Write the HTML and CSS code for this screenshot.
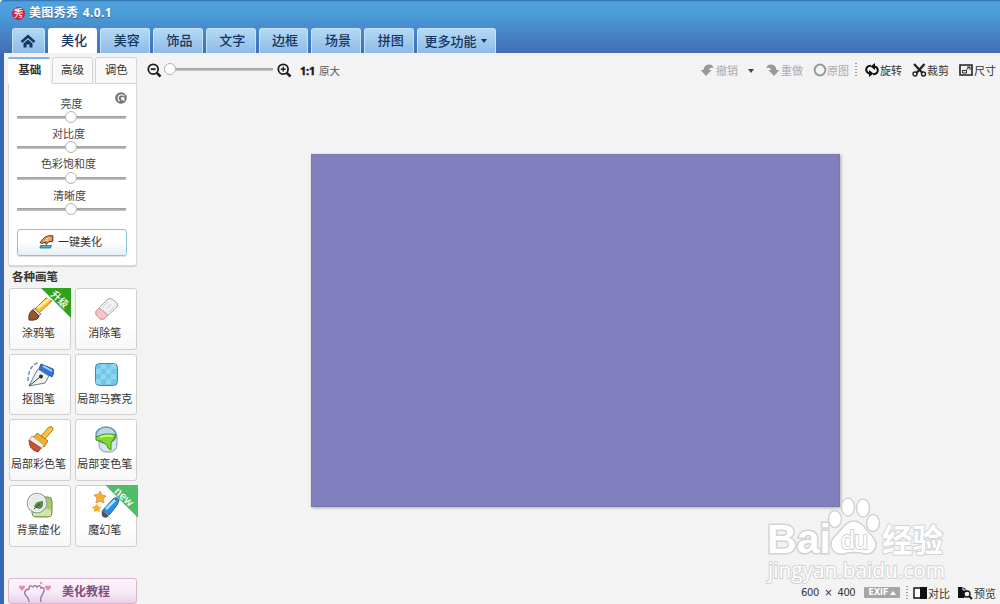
FILE: index.html
```html
<!DOCTYPE html>
<html lang="zh-CN">
<head>
<meta charset="utf-8">
<title>美图秀秀 4.0.1</title>
<link rel="stylesheet" href="styles.css">
</head>
<body>
<div class="app">
  <header class="header">
    <div class="titlebar">
      <span class="logo">秀</span>
      <h1 class="title">美图秀秀 4.0.1</h1>
    </div>
    <nav class="tabs">
      <a class="tab tab-home"><svg width="16" height="14" viewBox="0 0 16 14"><path d="M1.500 8 8 2.200 14.500 8" fill="none" stroke="#143763" stroke-width="2.500"/><path d="M3.500 9.500 8 5.600l4.500 3.900v4H9.500V10.500h-3v3h-3z" fill="#143763"/></svg></a>
      <a class="tab tab-active">美化</a>
      <a class="tab">美容</a>
      <a class="tab">饰品</a>
      <a class="tab">文字</a>
      <a class="tab">边框</a>
      <a class="tab">场景</a>
      <a class="tab">拼图</a>
      <a class="tab tab-more">更多功能<i class="caret"></i></a>
    </nav>
  </header>
  <div class="body">
    <aside class="sidebar">
      <div class="subtabs">
        <span class="subtab subtab-active">基础</span>
        <span class="subtab">高级</span>
        <span class="subtab">调色</span>
      </div>
      <section class="panel">
        <svg class="reset" width="12" height="12" viewBox="0 0 12 12"><circle cx="6" cy="6" r="5.800" fill="#747474"/><path d="M4.600 9.200C2.200 7.500 2.600 3 6.500 2.800q2 0 2.800 1.500" fill="none" stroke="#fff" stroke-width="1.100"/><path d="M5.800 5.300h3.600v3.500H8V7.600L6.800 9z" fill="#fff"/></svg>
        <div class="control"><span class="control-label">亮度</span><span class="slider"><i class="thumb"></i></span></div>
        <div class="control"><span class="control-label shift">对比度</span><span class="slider"><i class="thumb"></i></span></div>
        <div class="control control-wide"><span class="control-label shift">色彩饱和度</span><span class="slider"><i class="thumb"></i></span></div>
        <div class="control"><span class="control-label shift-less">清晰度</span><span class="slider"><i class="thumb"></i></span></div>
        <button class="auto"><svg width="15" height="14" viewBox="0 0 15 14"><path d="M1.500 10.500h11l-1 2.500H1z" fill="#49a9c9" stroke="#236b88" stroke-width=".8"/><path d="M1 7.500 5.500 2.500 9.500.8h4.300v5.400l-4 .6-2.300 2.500-1.200-.7 1-2L3 8.500z" fill="#e5a35a" stroke="#50300f" stroke-width="1"/><path d="m7 4 3-1.500M6 6l3-1" stroke="#fce4b3"/></svg><span class="auto-text">一键美化</span></button>
      </section>
      <h2 class="heading">各种画笔</h2>
      <div class="tools">
        <div class="tool"><svg width="28" height="28" viewBox="0 0 28 28"><path d="M9 15 20 4l6 3-13 12z" fill="#f8bd35" stroke="#bf8117"/><path d="m12 14 11-9" stroke="#fff0a0" stroke-width="2.500"/><path d="m8 14 7 6-2 2-7-5z" fill="#d8d5cf" stroke="#8c8579"/><path d="M7 16q-5 2-4 10 9 1 10-4z" fill="#95572b" stroke="#60331a"/></svg><span>涂鸦笔</span><b class="ribbon ribbon-up"><em>升级</em></b></div>
        <div class="tool"><svg width="28" height="28" viewBox="0 0 28 28"><path d="M4 17 16 5q2-1 4 0l5 4q1 2 0 4L12 25H8l-4-4z" fill="#f1f1f2" stroke="#aaa"/><path d="m4 17 3-3 9 7-4 4H8l-4-4z" fill="#f6c4c8" stroke="#d1959b"/><path d="m8 14 9 7M16 8l-5 5m8-3-5 5m8-2-5 5" stroke="#ccc"/></svg><span>消除笔</span></div>
        <div class="tool"><svg width="28" height="28" viewBox="0 0 28 28"><path d="M2 21Q2 6 13 2" fill="none" stroke="#6e8fc5" stroke-width="1.500" stroke-dasharray="4 2"/><path d="m15 4 12 5q2 2-1 8L13 9z" fill="#2f74d8" stroke="#2258a6"/><path d="m17 6 9 5" stroke="#a5d5ff" stroke-width="2"/><path d="m12 9 11 7-4 7-16 3 6-12z" fill="#eef0f1" stroke="#717b87"/><path d="m3 26 11-9" stroke="#444"/><circle cx="15" cy="16.500" r="2" fill="#333"/></svg><span>抠图笔</span></div>
        <div class="tool"><svg width="28" height="28" viewBox="0 0 28 28"><rect x="3.500" y="3.500" width="22" height="22" rx="4" fill="#72c6ec" stroke="#4387b3"/><path d="M9 4h5v5H9zm10 0h5v5h-5zM4 9h5v5H4zm10 0h5v5h-5zM9 14h5v5H9zm10 0h5v5h-5zM4 19h5v5H4zm10 0h5v5h-5z" fill="#98dcf3" opacity=".75"/></svg><span>局部马赛克</span></div>
        <div class="tool"><svg width="28" height="28" viewBox="0 0 28 28"><path d="m15 11 7-8q3-3 5 0 1 2-3 5l-5 6z" fill="#fcc53c" stroke="#b8781d"/><path d="m11 8 11 8-4 6L6 12q4 0 5-4z" fill="#f2b128" stroke="#b97419"/><path d="m6 11 12 9-3 4L3 15z" fill="#f2eee7" stroke="#b8aaa0"/><path d="m3 15 12 8-3 4Q3 25 3 15z" fill="#c95232" stroke="#9a422e"/></svg><span>局部彩色笔</span></div>
        <div class="tool"><svg width="28" height="28" viewBox="0 0 28 28"><rect x="7" y="5" width="18" height="22" rx="7" fill="#d5e3ed" stroke="#7c9db4"/><ellipse cx="14" cy="10" rx="10" ry="8" fill="#bcd7e7" stroke="#6c95af" stroke-width="1.500"/><path d="M4 12q10-5 20-2l-3 5-2 3v7l-3-2-1-3-6-4-5-1z" fill="#83d72d" stroke="#40961f"/><path d="M8 12q6-2 13-1" fill="none" stroke="#caf57c" stroke-width="2"/></svg><span>局部变色笔</span></div>
        <div class="tool"><svg width="28" height="28" viewBox="0 0 28 28"><rect x="6" y="6" width="20" height="20" rx="4" fill="#a9ca70" stroke="#738b59"/><path d="M7 20q10-4 18-1v6H7z" fill="#d5e5a4"/><circle cx="11" cy="12" r="9" fill="#e9f0ed" fill-opacity=".95" stroke="#8a9999" stroke-width="2.500"/><circle cx="11" cy="12" r="8.500" fill="none" stroke="#fff" stroke-width="1.500"/><path d="M8 16q1-6 9-6 1 7-4 8z" fill="#568a48"/><path d="m8 18 6-5" stroke="#234d33"/></svg><span>背景虚化</span></div>
        <div class="tool"><svg width="28" height="28" viewBox="0 0 28 28"><path d="m8 0 2 4 4 1-3 3 1 4-4-2-4 2 1-5-3-3 5-1z" fill="#f7ae35" stroke="#e69b40"/><path d="m5 13 1.500 2.500 3 .5-2 2v3L5 20l-3 1v-3l-2-2 3-1z" fill="#f7ae35"/><path d="M11 19 21 8q4-3 6 1 0 4-10 15z" fill="#2c91df" stroke="#23609f"/><path d="m14 18 9-9" stroke="#9ee7ff" stroke-width="2.500"/><path d="m10 19 7 6q-3 3-6 1-2-2-1-7z" fill="#465164"/></svg><span>魔幻笔</span><b class="ribbon ribbon-new"><em>new</em></b></div>
      </div>
      <a class="tutorial"><svg width="34" height="24" viewBox="0 0 34 24"><path d="m4 12-3-3.500q-.5-3 3-1.500 3.500-1.500 3 1.500zm26 0-3-3.500q-.5-3 3-1.500 3.500-1.500 3 1.500z" fill="#e98dae"/><path d="M11 23q0-3-2-5-4-4-1-7l3-1q0-5 4-2 2-3 4 0 3-3 4 1 4-1 3 3-1 3-3 6-1 2 0 5" fill="none" stroke="#a279a4" stroke-width="1.500"/><circle cx="23" cy="4" r="1.300" fill="#c8a5c3"/></svg>美化教程</a>
    </aside>
    <main class="workspace">
      <div class="toolbar">
        <svg class="zoom-out" width="15" height="15" viewBox="0 0 15 15" fill="none" stroke="#1c1c1c" stroke-width="1.800"><circle cx="6.200" cy="6.200" r="4.900"/><path d="M3.800 6.200h4.800"/><path d="m9.800 9.800 3.700 3.700" stroke-width="2.600"/></svg>
        <div class="zoom-track"><i class="thumb"></i></div>
        <svg class="zoom-in" width="15" height="15" viewBox="0 0 15 15" fill="none" stroke="#1c1c1c" stroke-width="1.800"><circle cx="6.200" cy="6.200" r="4.900"/><path d="M3.800 6.200h4.800M6.200 3.800v4.800" stroke-width="1.400"/><path d="m9.800 9.800 3.700 3.700" stroke-width="2.600"/></svg>
        <b class="ratio">1:1</b><span class="gray">原大</span>
        <div class="actions">
          <span class="action off undo"><svg width="14" height="14" viewBox="0 0 14 14"><path d="M.5 7h3Q4 1.500 9.500 1.500q3.500 0 4 3.500-4-1-4.500 2h2.500L6 13z" fill="#999"/></svg>撤销</span>
          <i class="caret caret-gray"></i>
          <span class="action off redo"><svg width="14" height="14" viewBox="0 0 14 14"><path d="M13.500 7h-3Q10 1.500 4.500 1.500 1 1.500.5 5q4-1 4.500 2H2.500L8 13z" fill="#999"/></svg>重做</span>
          <span class="action off original"><svg width="14" height="14" viewBox="0 0 14 14"><circle cx="7" cy="7" r="5.400" fill="none" stroke="#999" stroke-width="2"/></svg>原图</span>
          <i class="dots"></i>
          <span class="action rotate"><svg width="14" height="14" viewBox="0 0 14 14"><path d="M6 2.800C2 2.500.8 5.500 1.400 7.800c.5 1.800 2 2.700 4 2.700M8 11.200c4 .3 5.200-2.700 4.600-5-.5-1.800-2-2.700-4-2.700" fill="none" stroke="#111" stroke-width="2"/><path d="m4 7 4.500 3.500-4.500 3.500zM10 0 5.500 3.500 10 7z" fill="#111"/></svg>旋转</span>
          <span class="action crop"><svg width="15" height="14" viewBox="0 0 15 14" fill="none" stroke="#222"><path d="m2 1 8.500 9M12.500 1 4.500 10" stroke-width="2.300"/><circle cx="3" cy="11" r="2" stroke-width="1.400"/><circle cx="11.500" cy="11" r="2" stroke-width="1.400"/></svg>裁剪</span>
          <span class="action size"><svg width="14" height="12" viewBox="0 0 14 12" fill="none" stroke="#222"><path d="M1 1h12v10H1z" stroke-width="1.600"/><path d="M3.500 6.500h4V9h-4zM7.500 5.500l3-2.500M8 3h3v3"/></svg>尺寸</span>
        </div>
      </div>
      <div class="stage"><div class="canvas"></div></div>
      <footer class="status">
        <span class="dims">600 × 400</span><span class="exif">EXIF<i></i></span><i class="dots"></i>
        <span class="action compare"><svg width="14" height="12" viewBox="0 0 14 12"><path d="M1 1h12v10H1z" fill="#fff" stroke="#111" stroke-width="1.400"/><path d="M7 0h7v12H7z" fill="#111"/></svg>对比</span>
        <span class="action preview"><svg width="15" height="14" viewBox="0 0 15 14"><path d="M0 1h5l4 3v3l-3 5H0z" fill="#111"/><path d="M5 1v3h4" fill="none" stroke="#fff"/><circle cx="9" cy="8" r="3" fill="#f3f3f3" stroke="#111" stroke-width="1.300"/><path d="m11 10 3 3" stroke="#111" stroke-width="2"/></svg>预览</span>
      </footer>
    </main>
  </div>
  <svg class="watermark" width="186" height="98" viewBox="0 0 186 98">
    <text class="wm-brand" x="3" y="60" textLength="64" lengthAdjust="spacingAndGlyphs" font-size="41">Bai</text>
    <g fill="#fff" stroke="#d2d2d2" stroke-width="1.500">
      <ellipse cx="71" cy="26" rx="6.500" ry="8.500"/><ellipse cx="84" cy="14" rx="6.500" ry="9"/><ellipse cx="99" cy="15" rx="6.500" ry="9"/><ellipse cx="109" cy="30" rx="6.500" ry="8.500"/>
      <path d="M90 28c9 0 12 10 18 15 8 8 3 19-7 18-8-2-14-2-21 0-11 2-17-9-10-17 8-7 11-16 20-16z"/>
    </g>
    <text class="wm-du" x="77" y="56" font-size="25" textLength="27">du</text>
    <text class="wm-cjk" x="118" y="59" font-size="32" textLength="61" lengthAdjust="spacingAndGlyphs">经验</text>
    <text class="wm-url" x="4" y="85" font-size="21" textLength="177" lengthAdjust="spacingAndGlyphs">jingyan.baidu.com</text>
  </svg>
</div>
</body>
</html>
```
FILE: styles.css
```css
* { box-sizing: border-box; }
body { margin: 0; font-family: "Liberation Sans", "Noto Sans CJK SC", sans-serif; font-size: 11px; color: #333; }
svg { display: block; flex: none; }
i, em { font-style: normal; }
.app { position: relative; width: 1000px; height: 604px; overflow: hidden; background: #f3f3f3; display: flex; flex-direction: column; }
.header { height: 53px; flex: none; background: linear-gradient(#2d6cac 0, #50a1dc 2px, #4a9bd9 15px, #426fb5 52px); border-radius: 4px 0 0 0; }
.titlebar { height: 28px; padding: 0 0 2px 12px; display: flex; align-items: center; }
.logo { width: 13px; height: 13px; border-radius: 50%; background: radial-gradient(#df3549, #b71530); color: #fff; font: 10px/12px "Noto Sans CJK SC", sans-serif; text-align: center; margin-right: 4px; }
.title { margin: 0; font: bold 12px/18px "DejaVu Sans", "Noto Sans CJK SC", sans-serif; font-family: "Open Sans", "Noto Sans CJK SC", sans-serif; color: #fff; letter-spacing: .35px; word-spacing: 1px; text-shadow: 0 1px 1px #2a609b; }
.tabs { display: flex; gap: 3px; height: 25px; padding-left: 12px; }
.tab { width: 49.800px; display: flex; align-items: center; justify-content: center; border: 1px solid #c5e3f8; border-bottom: 0; border-radius: 3px 3px 0 0; background: linear-gradient(#b5d9f5, #8dbbe5); color: #16355f; font: 500 13px/22px "Noto Sans CJK SC", sans-serif; padding: 0 0 2px 3px; }
.tab-home { width: 32.500px; padding: 0; }
.tab-active { background: #fff; border-color: #fff; }
.tab-more { width: 79px; padding: 0 2px 0 0; }
.caret { border: 3.500px solid transparent; border-top: 4px solid #16355f; border-bottom: 0; margin-left: 4px; }
.body { flex: 1; min-height: 0; display: flex; border-left: 4px solid #3768b3; }
.sidebar { width: 134px; flex: none; padding: 4px 0 0 4px; }
.subtabs { display: flex; width: 129px; gap: 2px; height: 27px; }
.subtab { flex: 1; height: 27px; border: 1px solid #d6d6d6; border-radius: 3px 3px 0 0; background: #f9f9f9; text-align: center; font: 11.500px/23px "Noto Sans CJK SC", sans-serif; }
.subtab-active { background: #fff; border: 0; border-top: 2px solid #7cb7e4; border-radius: 2px 2px 0 0; font-weight: 700; padding-left: 2px; line-height: 21px; }
.panel { position: relative; width: 129px; height: 182px; background: #fff; border: 1px solid #dadada; border-top: 0; border-radius: 0 0 3px 3px; box-shadow: 0 1px 1px #d0d0d0; padding: 13px 10px 0 8px; }
.reset { position: absolute; right: 9px; top: 8px; }
.control { height: 30px; display: flex; flex-direction: column; }
.control-wide { height: 32px; }
.control-wide .slider { margin-top: 1px; }
.control-label { height: 14px; text-align: center; font: 11px/12px "Noto Sans CJK SC", sans-serif; color: #444; }
.shift { padding-right: 6px; }
.shift-less { padding-right: 4px; }
.slider { display: flex; align-items: center; justify-content: center; height: 12px; padding-right: 2px; background: linear-gradient(#999, #c7c7c7) center / 100% 3px no-repeat; }
.thumb { display: block; width: 12px; height: 12px; border: 1px solid #b4b4b4; border-radius: 50%; background: #fff; }
.auto { width: 110px; height: 27px; margin: 10px 0 0; padding: 0 3px 2px 0; display: flex; align-items: center; justify-content: center; gap: 4px; border: 1px solid #96bfd4; border-radius: 3px; background: linear-gradient(#fff 45%, #e6f0f6); box-shadow: 0 1px 1px #d5e0e6; color: #333; font: 11px/20px "Noto Sans CJK SC", sans-serif; }
.auto-text { padding-bottom: 2px; }
.heading { margin: 2px 0 3px 4px; font: bold 11.500px/17px "Noto Sans CJK SC", sans-serif; color: #333; }
.tools { display: grid; grid-template-columns: 62px 62px; grid-auto-rows: 61.500px; gap: 4.200px; margin-left: 1px; }
.tool { position: relative; display: flex; flex-direction: column; align-items: center; padding-top: 5px; border: 1px solid #d0d0d0; border-radius: 3px; background: linear-gradient(#fff 60%, #f7f7f7); }
.tool span { font: 11px/16px "Noto Sans CJK SC", sans-serif; margin-top: 2px; white-space: nowrap; padding-right: 3px; }
.ribbon { position: absolute; top: -1px; right: -1px; width: 30px; height: 30px; font: 500 10px/12px "Noto Sans CJK SC", sans-serif; color: #fff; clip-path: polygon(0 0, 100% 0, 100% 100%); background: #2fa11d; }
.ribbon em { position: absolute; top: 5px; right: -3px; width: 28px; text-align: center; transform: rotate(43deg); }
.ribbon-new { background: #4dbd67; width: 33px; height: 33px; right: -2px; }
.ribbon-new em { font-size: 11px; top: 5px; right: -1px; }
.tutorial { display: flex; align-items: center; width: 129px; height: 26px; margin-top: 31px; padding-left: 9px; gap: 10px; border: 1px solid #d8b6d2; border-radius: 3px; background: linear-gradient(#fcf4fa, #f5e9f6 60%, #eacfe6); color: #81507e; font: bold 12px/22px "Noto Sans CJK SC", sans-serif; }
.workspace { flex: 1; min-width: 0; display: flex; flex-direction: column; }
.toolbar { height: 34px; display: flex; align-items: center; padding-left: 9px; }
.zoom-track { width: 109px; height: 12px; margin: -2px 4px 0 2px; background: linear-gradient(#999, #ccc) center / 100% 3px no-repeat; }
.ratio { margin: 2px 4px 0 8px; font: 700 11px/16px "Open Sans", sans-serif; color: #161616; -webkit-text-stroke: .4px #161616; letter-spacing: -.2px; width: 15px; }
.gray { margin-top: 1px; font: 10.500px/16px "Noto Sans CJK SC", sans-serif; color: #555; }
.actions { display: flex; align-items: center; margin-left: auto; padding: 0 4px 1px 0; }
.action { display: flex; align-items: center; gap: 2px; font: 11px/16px "Noto Sans CJK SC", sans-serif; color: #333; white-space: nowrap; }
.off { color: #aaa; }
.caret-gray { border-top-color: #444; margin: 2px 12px 0 10px; }
.redo { gap: 1px; margin-right: 10px; }
.original { gap: 0; }
.rotate { gap: 1px; margin-right: 10px; }
.crop { gap: 0; margin-right: 10px; }
.size { gap: 1px; }
.dots { width: 2px; height: 14px; margin: 0 8px 0 6px; background: repeating-linear-gradient(#999 0 1px, transparent 1px 3px); }
.stage { height: 493px; flex: none; padding: 67px 0 0 173px; }
.canvas { width: 529px; height: 353px; background: #827fbf; border: 1px solid #7976b1; box-shadow: 1px 1px 3px #aaa; }
.status { height: 24px; flex: none; display: flex; align-items: center; justify-content: flex-end; padding: 1px 4px 0 0; }
.dims { font: 10px/16px "DejaVu Sans", sans-serif; letter-spacing: -.4px; word-spacing: 2.500px; width: 54px; margin-right: 9px; white-space: nowrap; }
.exif { display: flex; align-items: center; justify-content: center; gap: 1px; width: 36px; height: 11px; border-radius: 1px; background: #a6a6a6; color: #fff; font: bold 8px/11px "DejaVu Sans", sans-serif; }
.exif i { border: 3px solid transparent; border-bottom: 4px solid #fff; border-top: 0; }
.status .dots { margin: 0 5px 0 6px; }
.compare { gap: 1px; margin-right: 8px; }
.preview { gap: 1px; }
.watermark { position: absolute; left: 764px; top: 493px; overflow: visible; }
.watermark text { fill: #fff; stroke: #d2d2d2; stroke-width: 2px; paint-order: stroke; }
.watermark .wm-brand { font-family: "Liberation Sans", sans-serif; font-weight: 700; stroke-width: 3px; }
.watermark .wm-du { font-family: "Liberation Sans", sans-serif; }
.watermark .wm-cjk { font-family: "Noto Sans CJK SC", sans-serif; font-weight: 700; }
.watermark .wm-url { font-family: "Open Sans", sans-serif; }
```
